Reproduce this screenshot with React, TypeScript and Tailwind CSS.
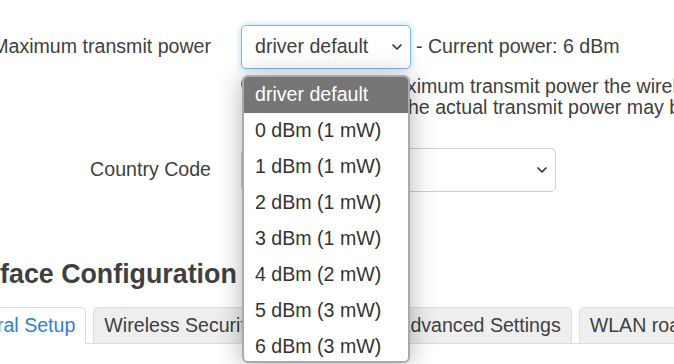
import { ChevronDown } from "lucide-react";

const options = [
    "driver default",
    "0 dBm (1 mW)",
    "1 dBm (1 mW)",
    "2 dBm (1 mW)",
    "3 dBm (1 mW)",
    "4 dBm (2 mW)",
    "5 dBm (3 mW)",
    "6 dBm (3 mW)",
    "7 dBm (5 mW)",
];

const tabs = ["General Setup", "Wireless Security", "MAC-Filter", "Advanced Settings", "WLAN roaming"];

export default function App() {
    return (
        <div className="relative w-[674px] h-[364px] overflow-hidden bg-white text-[#404040] text-[19.6px] font-[family-name:Liberation_Sans,Arial,sans-serif]">
            <div className="ml-[-60px] w-[900px] pt-[25px]">
                {/* Maximum transmit power */}
                <div className="flex items-center h-[44px]">
                    <div className="w-[301px] shrink-0 pr-[30px] text-right whitespace-nowrap">Maximum transmit power</div>
                    <div className="w-[170px] h-[44px] flex items-center justify-between pl-[13px] pr-[5px] border border-[#7db6e8] rounded-[5px] shadow-[0_0_6px_rgba(82,168,236,0.45)] bg-white">
                        <span className="whitespace-nowrap">driver default</span>
                        <ChevronDown className="w-4 h-4 text-[#333]" strokeWidth={2.5} />
                    </div>
                    <span className="ml-[5px] whitespace-nowrap">- Current power: 6 dBm</span>
                </div>

                {/* description */}
                <div className="flex mt-[7px]">
                    <div className="w-[301px] shrink-0" />
                    <div className="w-[18px] h-[18px] mt-[-1px] mr-[3px] rounded-full bg-[#2a74c9] shrink-0" />
                    <div className="leading-[21px] whitespace-nowrap">
                        Specifies the maximum transmit power the wireless radio may use. Depending on regulatory requirements and
                        <br />
                        wireless usage, the actual transmit power may be reduced by the driver.
                    </div>
                </div>

                {/* Country Code */}
                <div className="flex items-center h-[44px] mt-[30px]">
                    <div className="w-[301px] shrink-0 pr-[30px] text-right whitespace-nowrap">Country Code</div>
                    <div className="w-[315px] h-[44px] flex items-center justify-between pl-[13px] pr-[5px] border border-[#cfcfcf] rounded-[5px] bg-white">
                        <span className="whitespace-nowrap">00 - World</span>
                        <ChevronDown className="w-4 h-4 text-[#333]" strokeWidth={2.5} />
                    </div>
                </div>

                {/* heading */}
                <h3 className="mt-[66px] ml-[2px] text-[26.8px] leading-[32px] font-bold whitespace-nowrap">Interface Configuration</h3>

                {/* tabs */}
                <div className="mt-[17px] ml-[-2px] flex items-end gap-[7px] border-b border-[#dddddd] h-[37px]">
                    {tabs.map((t, i) => (
                        <div
                            key={t}
                            className={
                                i === 0
                                    ? "h-[37px] mb-[-1px] px-[10px] flex items-center border border-b-0 border-[#dddddd] rounded-t-[5px] bg-white text-[#2f7fd6] whitespace-nowrap"
                                    : i === 2
                                    ? "h-[36px] px-[5px] flex items-center border border-b-0 border-[#dddddd] rounded-t-[5px] bg-[#eeeeee] whitespace-nowrap"
                                    : "h-[36px] px-[10px] flex items-center border border-b-0 border-[#dddddd] rounded-t-[5px] bg-[#eeeeee] whitespace-nowrap"
                            }
                        >
                            {t}
                        </div>
                    ))}
                </div>
            </div>

            {/* open option list */}
            <div className="absolute left-[242px] top-[75px] w-[168px] h-[288px] border-2 border-[#a9a9a9] rounded-[6px] bg-white overflow-hidden shadow-[0_2px_26px_rgba(0,0,0,0.3)] text-[#333]">
                {options.map((o, i) => (
                    <div
                        key={o}
                        className={
                            i === 0
                                ? "h-[36px] pl-[11px] flex items-center bg-[#767676] text-white whitespace-nowrap"
                                : "h-[36px] pl-[11px] flex items-center whitespace-nowrap"
                        }
                    >
                        {o}
                    </div>
                ))}
            </div>
        </div>
    );
}
